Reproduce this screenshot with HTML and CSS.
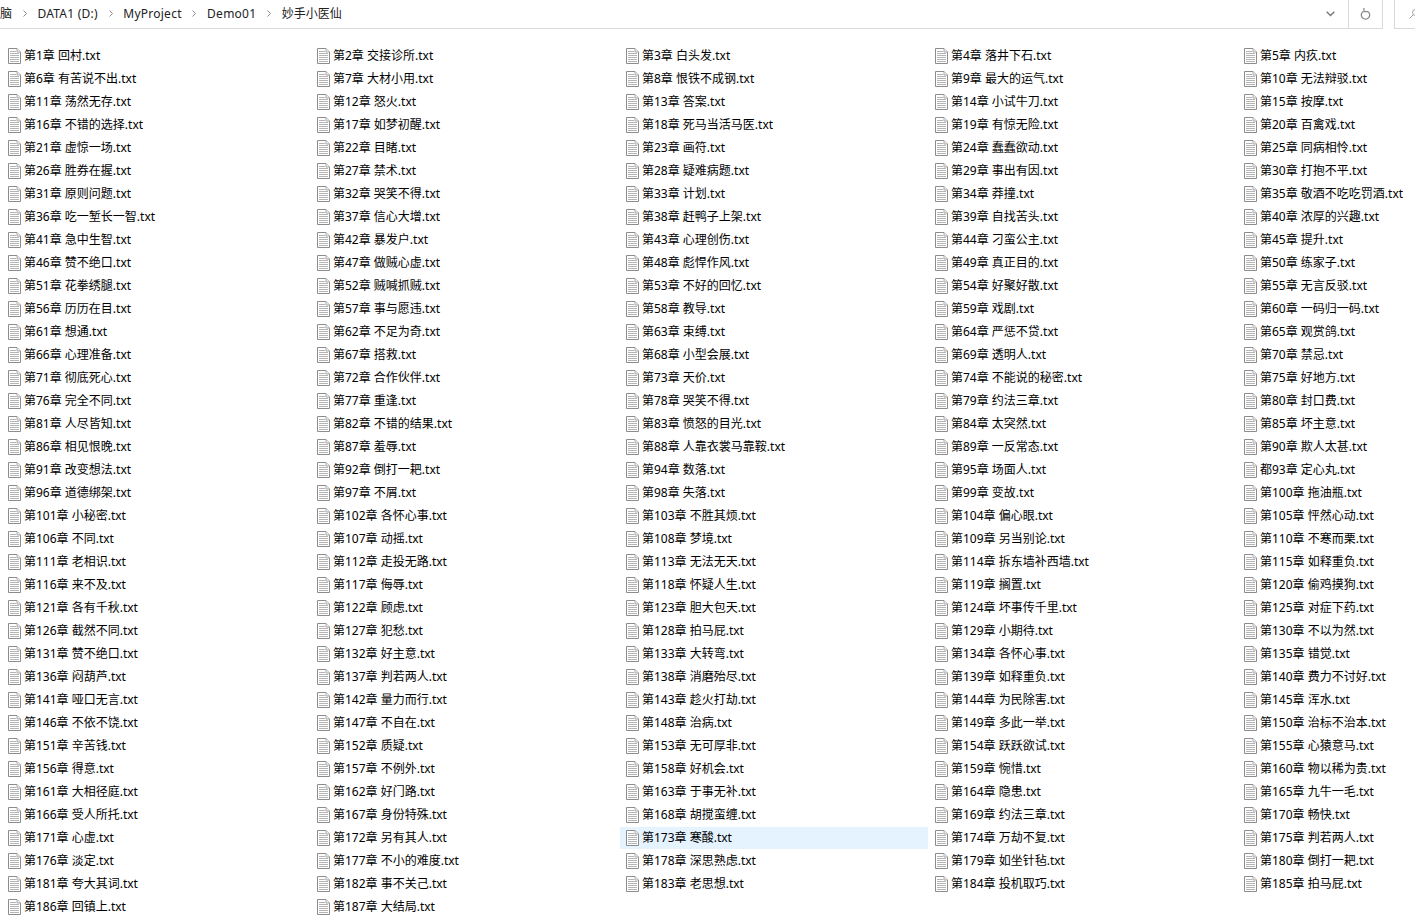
FILE: index.html
```html
<!DOCTYPE html>
<html lang="zh-CN">

<head>
  <meta charset="UTF-8">
  <title>妙手小医仙</title>
  <link rel="stylesheet" href="styles.css">
</head>

<body>
  <!-- Icon used by every row -->
  <svg class="defs" width="0" height="0">
    <symbol id="txt" viewBox="0 0 13 16">
      <path d="M.5.5H9L12.5 4V15.5H.5Z" fill="#fff" stroke="#8c8c8c"/>
      <path d="M9 .5V4H12.5" fill="#f0f0f0" stroke="#a8a8a8"/>
      <path d="M2 3.5H8M2 5.5H11M2 7.5H11M2 9.5H11M2 11.5H11M2 13.5H11" stroke="#b4b4b4" fill="none"/>
    </symbol>
  </svg>

  <!-- Address bar -->
  <div class="toolbar">
    <div class="address">
      <span>脑</span>
      <svg class="sep" viewBox="0 0 4 7"><path d="M.5.5L3.5 3.5L.5 6.5" fill="none" stroke="#8a8a8a"/></svg>
      <span class="latin">DATA1 (D:)</span>
      <svg class="sep" viewBox="0 0 4 7"><path d="M.5.5L3.5 3.5L.5 6.5" fill="none" stroke="#8a8a8a"/></svg>
      <span class="latin">MyProject</span>
      <svg class="sep" viewBox="0 0 4 7"><path d="M.5.5L3.5 3.5L.5 6.5" fill="none" stroke="#8a8a8a"/></svg>
      <span class="latin">Demo01</span>
      <svg class="sep" viewBox="0 0 4 7"><path d="M.5.5L3.5 3.5L.5 6.5" fill="none" stroke="#8a8a8a"/></svg>
      <span>妙手小医仙</span>
      <svg class="dropdown" viewBox="0 0 9 6"><path d="M.7.7L4.5 4.5L8.3.7" fill="none" stroke="#7a7a7a" stroke-width="1.5"/></svg>
      <div class="refresh">
        <svg viewBox="0 0 11 12" width="11" height="12"><path d="M3.5 3.2A4.2 4.2 0 1 0 7.5 3.2" fill="none" stroke="#8a8a8a" stroke-width="1.3"/><path d="M3 0V4.2H7" fill="none" stroke="#8a8a8a" stroke-width="1.2" transform="translate(1 -.5)"/></svg>
      </div>
    </div>
    <div class="search">
      <svg viewBox="0 0 10 10" width="10" height="10"><circle cx="6.5" cy="3.5" r="3" fill="none" stroke="#a0a0a0"/><path d="M4.3 5.7L.5 9.5" stroke="#a0a0a0" fill="none"/></svg>
    </div>
  </div>

  <!-- File list -->
  <ul class="files">
    <li><svg><use href="#txt"/></svg>第1章 回村.txt</li>
    <li><svg><use href="#txt"/></svg>第2章 交接诊所.txt</li>
    <li><svg><use href="#txt"/></svg>第3章 白头发.txt</li>
    <li><svg><use href="#txt"/></svg>第4章 落井下石.txt</li>
    <li><svg><use href="#txt"/></svg>第5章 内疚.txt</li>
    <li><svg><use href="#txt"/></svg>第6章 有苦说不出.txt</li>
    <li><svg><use href="#txt"/></svg>第7章 大材小用.txt</li>
    <li><svg><use href="#txt"/></svg>第8章 恨铁不成钢.txt</li>
    <li><svg><use href="#txt"/></svg>第9章 最大的运气.txt</li>
    <li><svg><use href="#txt"/></svg>第10章 无法辩驳.txt</li>
    <li><svg><use href="#txt"/></svg>第11章 荡然无存.txt</li>
    <li><svg><use href="#txt"/></svg>第12章 怒火.txt</li>
    <li><svg><use href="#txt"/></svg>第13章 答案.txt</li>
    <li><svg><use href="#txt"/></svg>第14章 小试牛刀.txt</li>
    <li><svg><use href="#txt"/></svg>第15章 按摩.txt</li>
    <li><svg><use href="#txt"/></svg>第16章 不错的选择.txt</li>
    <li><svg><use href="#txt"/></svg>第17章 如梦初醒.txt</li>
    <li><svg><use href="#txt"/></svg>第18章 死马当活马医.txt</li>
    <li><svg><use href="#txt"/></svg>第19章 有惊无险.txt</li>
    <li><svg><use href="#txt"/></svg>第20章 百禽戏.txt</li>
    <li><svg><use href="#txt"/></svg>第21章 虚惊一场.txt</li>
    <li><svg><use href="#txt"/></svg>第22章 目睹.txt</li>
    <li><svg><use href="#txt"/></svg>第23章 画符.txt</li>
    <li><svg><use href="#txt"/></svg>第24章 蠢蠢欲动.txt</li>
    <li><svg><use href="#txt"/></svg>第25章 同病相怜.txt</li>
    <li><svg><use href="#txt"/></svg>第26章 胜券在握.txt</li>
    <li><svg><use href="#txt"/></svg>第27章 禁术.txt</li>
    <li><svg><use href="#txt"/></svg>第28章 疑难病题.txt</li>
    <li><svg><use href="#txt"/></svg>第29章 事出有因.txt</li>
    <li><svg><use href="#txt"/></svg>第30章 打抱不平.txt</li>
    <li><svg><use href="#txt"/></svg>第31章 原则问题.txt</li>
    <li><svg><use href="#txt"/></svg>第32章 哭笑不得.txt</li>
    <li><svg><use href="#txt"/></svg>第33章 计划.txt</li>
    <li><svg><use href="#txt"/></svg>第34章 莽撞.txt</li>
    <li><svg><use href="#txt"/></svg>第35章 敬酒不吃吃罚酒.txt</li>
    <li><svg><use href="#txt"/></svg>第36章 吃一堑长一智.txt</li>
    <li><svg><use href="#txt"/></svg>第37章 信心大增.txt</li>
    <li><svg><use href="#txt"/></svg>第38章 赶鸭子上架.txt</li>
    <li><svg><use href="#txt"/></svg>第39章 自找苦头.txt</li>
    <li><svg><use href="#txt"/></svg>第40章 浓厚的兴趣.txt</li>
    <li><svg><use href="#txt"/></svg>第41章 急中生智.txt</li>
    <li><svg><use href="#txt"/></svg>第42章 暴发户.txt</li>
    <li><svg><use href="#txt"/></svg>第43章 心理创伤.txt</li>
    <li><svg><use href="#txt"/></svg>第44章 刁蛮公主.txt</li>
    <li><svg><use href="#txt"/></svg>第45章 提升.txt</li>
    <li><svg><use href="#txt"/></svg>第46章 赞不绝口.txt</li>
    <li><svg><use href="#txt"/></svg>第47章 做贼心虚.txt</li>
    <li><svg><use href="#txt"/></svg>第48章 彪悍作风.txt</li>
    <li><svg><use href="#txt"/></svg>第49章 真正目的.txt</li>
    <li><svg><use href="#txt"/></svg>第50章 练家子.txt</li>
    <li><svg><use href="#txt"/></svg>第51章 花拳绣腿.txt</li>
    <li><svg><use href="#txt"/></svg>第52章 贼喊抓贼.txt</li>
    <li><svg><use href="#txt"/></svg>第53章 不好的回忆.txt</li>
    <li><svg><use href="#txt"/></svg>第54章 好聚好散.txt</li>
    <li><svg><use href="#txt"/></svg>第55章 无言反驳.txt</li>
    <li><svg><use href="#txt"/></svg>第56章 历历在目.txt</li>
    <li><svg><use href="#txt"/></svg>第57章 事与愿违.txt</li>
    <li><svg><use href="#txt"/></svg>第58章 教导.txt</li>
    <li><svg><use href="#txt"/></svg>第59章 戏剧.txt</li>
    <li><svg><use href="#txt"/></svg>第60章 一码归一码.txt</li>
    <li><svg><use href="#txt"/></svg>第61章 想通.txt</li>
    <li><svg><use href="#txt"/></svg>第62章 不足为奇.txt</li>
    <li><svg><use href="#txt"/></svg>第63章 束缚.txt</li>
    <li><svg><use href="#txt"/></svg>第64章 严惩不贷.txt</li>
    <li><svg><use href="#txt"/></svg>第65章 观赏鸽.txt</li>
    <li><svg><use href="#txt"/></svg>第66章 心理准备.txt</li>
    <li><svg><use href="#txt"/></svg>第67章 搭救.txt</li>
    <li><svg><use href="#txt"/></svg>第68章 小型会展.txt</li>
    <li><svg><use href="#txt"/></svg>第69章 透明人.txt</li>
    <li><svg><use href="#txt"/></svg>第70章 禁忌.txt</li>
    <li><svg><use href="#txt"/></svg>第71章 彻底死心.txt</li>
    <li><svg><use href="#txt"/></svg>第72章 合作伙伴.txt</li>
    <li><svg><use href="#txt"/></svg>第73章 天价.txt</li>
    <li><svg><use href="#txt"/></svg>第74章 不能说的秘密.txt</li>
    <li><svg><use href="#txt"/></svg>第75章 好地方.txt</li>
    <li><svg><use href="#txt"/></svg>第76章 完全不同.txt</li>
    <li><svg><use href="#txt"/></svg>第77章 重逢.txt</li>
    <li><svg><use href="#txt"/></svg>第78章 哭笑不得.txt</li>
    <li><svg><use href="#txt"/></svg>第79章 约法三章.txt</li>
    <li><svg><use href="#txt"/></svg>第80章 封口费.txt</li>
    <li><svg><use href="#txt"/></svg>第81章 人尽皆知.txt</li>
    <li><svg><use href="#txt"/></svg>第82章 不错的结果.txt</li>
    <li><svg><use href="#txt"/></svg>第83章 愤怒的目光.txt</li>
    <li><svg><use href="#txt"/></svg>第84章 太突然.txt</li>
    <li><svg><use href="#txt"/></svg>第85章 坏主意.txt</li>
    <li><svg><use href="#txt"/></svg>第86章 相见恨晚.txt</li>
    <li><svg><use href="#txt"/></svg>第87章 羞辱.txt</li>
    <li><svg><use href="#txt"/></svg>第88章 人靠衣裳马靠鞍.txt</li>
    <li><svg><use href="#txt"/></svg>第89章 一反常态.txt</li>
    <li><svg><use href="#txt"/></svg>第90章 欺人太甚.txt</li>
    <li><svg><use href="#txt"/></svg>第91章 改变想法.txt</li>
    <li><svg><use href="#txt"/></svg>第92章 倒打一耙.txt</li>
    <li><svg><use href="#txt"/></svg>第94章 数落.txt</li>
    <li><svg><use href="#txt"/></svg>第95章 场面人.txt</li>
    <li><svg><use href="#txt"/></svg>都93章 定心丸.txt</li>
    <li><svg><use href="#txt"/></svg>第96章 道德绑架.txt</li>
    <li><svg><use href="#txt"/></svg>第97章 不屑.txt</li>
    <li><svg><use href="#txt"/></svg>第98章 失落.txt</li>
    <li><svg><use href="#txt"/></svg>第99章 变故.txt</li>
    <li><svg><use href="#txt"/></svg>第100章 拖油瓶.txt</li>
    <li><svg><use href="#txt"/></svg>第101章 小秘密.txt</li>
    <li><svg><use href="#txt"/></svg>第102章 各怀心事.txt</li>
    <li><svg><use href="#txt"/></svg>第103章 不胜其烦.txt</li>
    <li><svg><use href="#txt"/></svg>第104章 偏心眼.txt</li>
    <li><svg><use href="#txt"/></svg>第105章 怦然心动.txt</li>
    <li><svg><use href="#txt"/></svg>第106章 不同.txt</li>
    <li><svg><use href="#txt"/></svg>第107章 动摇.txt</li>
    <li><svg><use href="#txt"/></svg>第108章 梦境.txt</li>
    <li><svg><use href="#txt"/></svg>第109章 另当别论.txt</li>
    <li><svg><use href="#txt"/></svg>第110章 不寒而栗.txt</li>
    <li><svg><use href="#txt"/></svg>第111章 老相识.txt</li>
    <li><svg><use href="#txt"/></svg>第112章 走投无路.txt</li>
    <li><svg><use href="#txt"/></svg>第113章 无法无天.txt</li>
    <li><svg><use href="#txt"/></svg>第114章 拆东墙补西墙.txt</li>
    <li><svg><use href="#txt"/></svg>第115章 如释重负.txt</li>
    <li><svg><use href="#txt"/></svg>第116章 来不及.txt</li>
    <li><svg><use href="#txt"/></svg>第117章 侮辱.txt</li>
    <li><svg><use href="#txt"/></svg>第118章 怀疑人生.txt</li>
    <li><svg><use href="#txt"/></svg>第119章 搁置.txt</li>
    <li><svg><use href="#txt"/></svg>第120章 偷鸡摸狗.txt</li>
    <li><svg><use href="#txt"/></svg>第121章 各有千秋.txt</li>
    <li><svg><use href="#txt"/></svg>第122章 顾虑.txt</li>
    <li><svg><use href="#txt"/></svg>第123章 胆大包天.txt</li>
    <li><svg><use href="#txt"/></svg>第124章 坏事传千里.txt</li>
    <li><svg><use href="#txt"/></svg>第125章 对症下药.txt</li>
    <li><svg><use href="#txt"/></svg>第126章 截然不同.txt</li>
    <li><svg><use href="#txt"/></svg>第127章 犯愁.txt</li>
    <li><svg><use href="#txt"/></svg>第128章 拍马屁.txt</li>
    <li><svg><use href="#txt"/></svg>第129章 小期待.txt</li>
    <li><svg><use href="#txt"/></svg>第130章 不以为然.txt</li>
    <li><svg><use href="#txt"/></svg>第131章 赞不绝口.txt</li>
    <li><svg><use href="#txt"/></svg>第132章 好主意.txt</li>
    <li><svg><use href="#txt"/></svg>第133章 大转弯.txt</li>
    <li><svg><use href="#txt"/></svg>第134章 各怀心事.txt</li>
    <li><svg><use href="#txt"/></svg>第135章 错觉.txt</li>
    <li><svg><use href="#txt"/></svg>第136章 闷葫芦.txt</li>
    <li><svg><use href="#txt"/></svg>第137章 判若两人.txt</li>
    <li><svg><use href="#txt"/></svg>第138章 消磨殆尽.txt</li>
    <li><svg><use href="#txt"/></svg>第139章 如释重负.txt</li>
    <li><svg><use href="#txt"/></svg>第140章 费力不讨好.txt</li>
    <li><svg><use href="#txt"/></svg>第141章 哑口无言.txt</li>
    <li><svg><use href="#txt"/></svg>第142章 量力而行.txt</li>
    <li><svg><use href="#txt"/></svg>第143章 趁火打劫.txt</li>
    <li><svg><use href="#txt"/></svg>第144章 为民除害.txt</li>
    <li><svg><use href="#txt"/></svg>第145章 浑水.txt</li>
    <li><svg><use href="#txt"/></svg>第146章 不依不饶.txt</li>
    <li><svg><use href="#txt"/></svg>第147章 不自在.txt</li>
    <li><svg><use href="#txt"/></svg>第148章 治病.txt</li>
    <li><svg><use href="#txt"/></svg>第149章 多此一举.txt</li>
    <li><svg><use href="#txt"/></svg>第150章 治标不治本.txt</li>
    <li><svg><use href="#txt"/></svg>第151章 辛苦钱.txt</li>
    <li><svg><use href="#txt"/></svg>第152章 质疑.txt</li>
    <li><svg><use href="#txt"/></svg>第153章 无可厚非.txt</li>
    <li><svg><use href="#txt"/></svg>第154章 跃跃欲试.txt</li>
    <li><svg><use href="#txt"/></svg>第155章 心猿意马.txt</li>
    <li><svg><use href="#txt"/></svg>第156章 得意.txt</li>
    <li><svg><use href="#txt"/></svg>第157章 不例外.txt</li>
    <li><svg><use href="#txt"/></svg>第158章 好机会.txt</li>
    <li><svg><use href="#txt"/></svg>第159章 惋惜.txt</li>
    <li><svg><use href="#txt"/></svg>第160章 物以稀为贵.txt</li>
    <li><svg><use href="#txt"/></svg>第161章 大相径庭.txt</li>
    <li><svg><use href="#txt"/></svg>第162章 好门路.txt</li>
    <li><svg><use href="#txt"/></svg>第163章 于事无补.txt</li>
    <li><svg><use href="#txt"/></svg>第164章 隐患.txt</li>
    <li><svg><use href="#txt"/></svg>第165章 九牛一毛.txt</li>
    <li><svg><use href="#txt"/></svg>第166章 受人所托.txt</li>
    <li><svg><use href="#txt"/></svg>第167章 身份特殊.txt</li>
    <li><svg><use href="#txt"/></svg>第168章 胡搅蛮缠.txt</li>
    <li><svg><use href="#txt"/></svg>第169章 约法三章.txt</li>
    <li><svg><use href="#txt"/></svg>第170章 畅快.txt</li>
    <li><svg><use href="#txt"/></svg>第171章 心虚.txt</li>
    <li><svg><use href="#txt"/></svg>第172章 另有其人.txt</li>
    <li class="hover"><svg><use href="#txt"/></svg>第173章 寒酸.txt</li>
    <li><svg><use href="#txt"/></svg>第174章 万劫不复.txt</li>
    <li><svg><use href="#txt"/></svg>第175章 判若两人.txt</li>
    <li><svg><use href="#txt"/></svg>第176章 淡定.txt</li>
    <li><svg><use href="#txt"/></svg>第177章 不小的难度.txt</li>
    <li><svg><use href="#txt"/></svg>第178章 深思熟虑.txt</li>
    <li><svg><use href="#txt"/></svg>第179章 如坐针毡.txt</li>
    <li><svg><use href="#txt"/></svg>第180章 倒打一耙.txt</li>
    <li><svg><use href="#txt"/></svg>第181章 夸大其词.txt</li>
    <li><svg><use href="#txt"/></svg>第182章 事不关己.txt</li>
    <li><svg><use href="#txt"/></svg>第183章 老思想.txt</li>
    <li><svg><use href="#txt"/></svg>第184章 投机取巧.txt</li>
    <li><svg><use href="#txt"/></svg>第185章 拍马屁.txt</li>
    <li><svg><use href="#txt"/></svg>第186章 回镇上.txt</li>
    <li><svg><use href="#txt"/></svg>第187章 大结局.txt</li>
  </ul>
</body>

</html>
```

FILE: styles.css
```css
body {
  margin: 0;
  background-color: #fff;
  color: #000;
  font-family: "Noto Sans", "Noto Sans CJK SC", sans-serif;
  font-size: 12px;
  overflow: hidden;
}

.defs {
  display: block;
}

.toolbar {
  display: flex;
  height: 29px;
  gap: 11px;
}

.address {
  display: flex;
  align-items: center;
  gap: 10.7px;
  width: 1383px;
  box-sizing: border-box;
  border-right: 1px solid #d9d9d9;
  border-bottom: 1px solid #d9d9d9;
  color: #222;
}

.address span,
.sep {
  margin-bottom: 2px;
}

.address .latin {
  letter-spacing: 0.25px;
}

.sep {
  width: 4px;
  height: 7px;
  flex: none;
}

.dropdown {
  width: 9px;
  height: 6px;
  margin-left: auto;
}

.refresh {
  display: flex;
  align-items: center;
  justify-content: center;
  width: 33px;
  height: 100%;
  margin-left: 2px;
  border-left: 1px solid #d9d9d9;
}

.search {
  display: flex;
  align-items: center;
  flex: 1;
  padding-left: 14px;
  overflow: hidden;
  border-left: 1px solid #d9d9d9;
  border-bottom: 1px solid #d9d9d9;
}

.search svg {
  flex: none;
}

.files {
  display: grid;
  grid-template-columns: repeat(4, 308px) 1fr;
  grid-auto-rows: 22px;
  gap: 1px;
  margin: 0;
  padding: 16px 0 0 2px;
  list-style: none;
}

.files li {
  display: flex;
  align-items: flex-start;
  gap: 3px;
  padding-left: 6px;
  line-height: 21px;
  white-space: nowrap;
}

.files svg {
  width: 13px;
  height: 16px;
  margin-top: 3px;
  flex: none;
}

.files li.hover {
  background-color: #e5f3ff;
}
```
